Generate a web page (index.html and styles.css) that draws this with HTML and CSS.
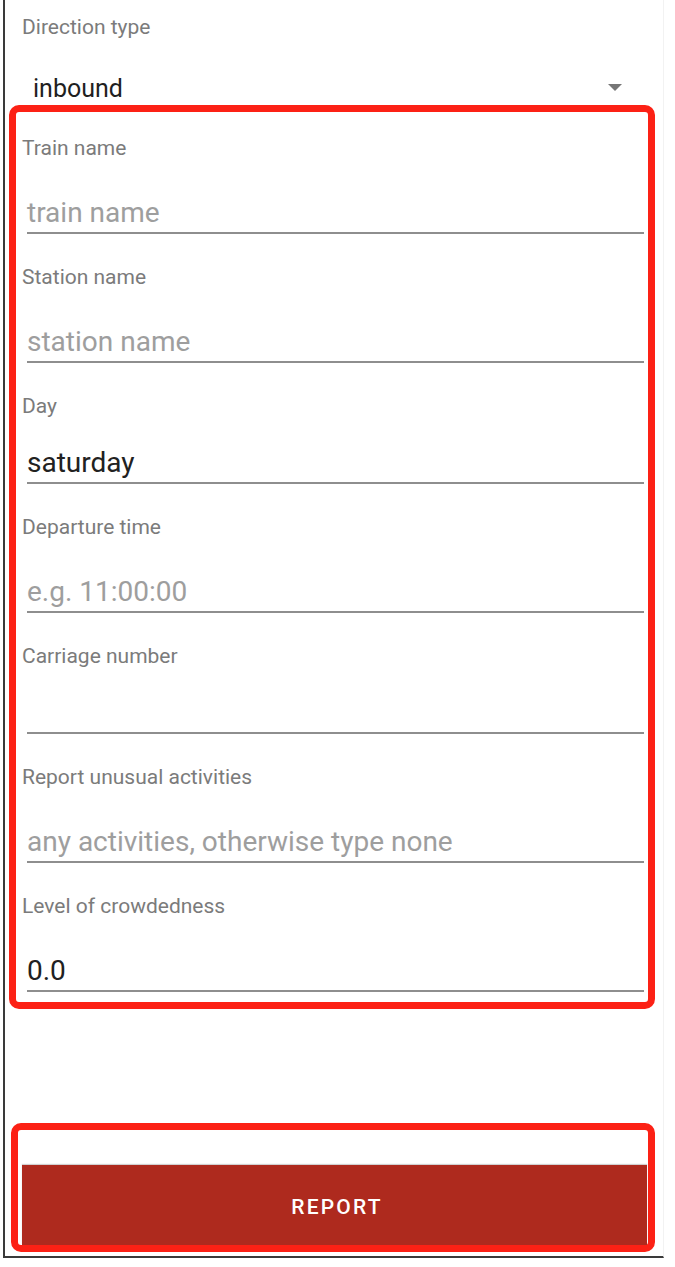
FILE: index.html
```html
<!DOCTYPE html>
<html lang="en">
<head>
<meta charset="utf-8">
<title>Report</title>
<link rel="stylesheet" href="styles.css">
</head>
<body>
<div class="frame">
  <div class="direction">
    <div class="dir-label">Direction type</div>
    <div class="select-row">
      <span class="select-value">inbound</span>
      <svg class="caret" width="14" height="7" viewBox="0 0 14 7"><path d="M0 0 L14 0 L7 7 Z" fill="#767676"/></svg>
    </div>
  </div>

  <div class="form-box">
    <div class="field">
      <div class="label">Train name</div>
      <div class="input placeholder">train name</div>
    </div>
    <div class="field">
      <div class="label">Station name</div>
      <div class="input placeholder">station name</div>
    </div>
    <div class="field">
      <div class="label">Day</div>
      <div class="input value compact">saturday</div>
    </div>
    <div class="field">
      <div class="label">Departure time</div>
      <div class="input placeholder">e.g. 11:00:00</div>
    </div>
    <div class="field">
      <div class="label">Carriage number</div>
      <div class="input value compact"></div>
    </div>
    <div class="field">
      <div class="label">Report unusual activities</div>
      <div class="input placeholder">any activities, otherwise type none</div>
    </div>
    <div class="field">
      <div class="label">Level of crowdedness</div>
      <div class="input value">0.0</div>
    </div>
  </div>

  <div class="button-box">
    <div class="button-space"></div>
    <div class="report-btn">REPORT</div>
  </div>
</div>
</body>
</html>
```

FILE: styles.css
```css
* { box-sizing: border-box; }
html, body { margin: 0; padding: 0; background: #ffffff; }
body { font-family: Roboto, "Noto Sans", "Liberation Sans", sans-serif; }

.frame {
  margin-left: 3px;
  width: 661px;
  border-left: 2px solid #3a3a3a;
  border-bottom: 2px solid #3a3a3a;
  border-right: 1px solid #f2f2f2;
  padding-bottom: 4px;
  display: flex;
  flex-direction: column;
}

.direction { padding-top: 15px; }
.dir-label {
  margin-left: 17px;
  font-size: 21px;
  line-height: 24px;
  color: #7b7b7b;
}
.select-row {
  margin-top: 33px;
  padding-left: 28px;
  padding-right: 41px;
  display: flex;
  justify-content: space-between;
  align-items: center;
  height: 30px;
}
.select-value {
  font-size: 25px;
  line-height: 30px;
  color: #1f1f1f;
  position: relative;
  top: 2px;
}
.caret { display: block; margin-top: 1px; }

.form-box {
  margin-top: 3px;
  margin-left: 4px;
  width: 646px;
  border: 7px solid #fc2115;
  border-radius: 10px;
  padding: 24px 0 10px 6px;
  display: flex;
  flex-direction: column;
  gap: 31px;
}
.label {
  font-size: 21px;
  line-height: 24px;
  color: #7b7b7b;
}
.input {
  margin-left: 5px;
  margin-right: 4px;
  padding-top: 36px;
  padding-bottom: 2px;
  height: 74px;
  font-size: 28px;
  line-height: 34px;
  border-bottom: 2px solid #8e8e8e;
  white-space: nowrap;
}
.input.compact { padding-top: 28px; height: 66px; }
.placeholder { color: #9e9e9e; }
.value { color: #212121; }

.button-box {
  margin-top: 114px;
  margin-left: 6px;
  width: 644px;
  border: 7px solid #fc2115;
  border-radius: 10px;
  padding: 0 1px 0 4px;
}
.button-space { height: 35px; }
.report-btn {
  height: 80px;
  padding-top: 4px;
  padding-left: 5px;
  background: #ae2a1e;
  color: #ffffff;
  font-size: 21px;
  font-weight: 500;
  letter-spacing: 2.2px;
  display: flex;
  align-items: center;
  justify-content: center;
  box-shadow: 0 -1px 1px rgba(0,0,0,0.18);
}
```
